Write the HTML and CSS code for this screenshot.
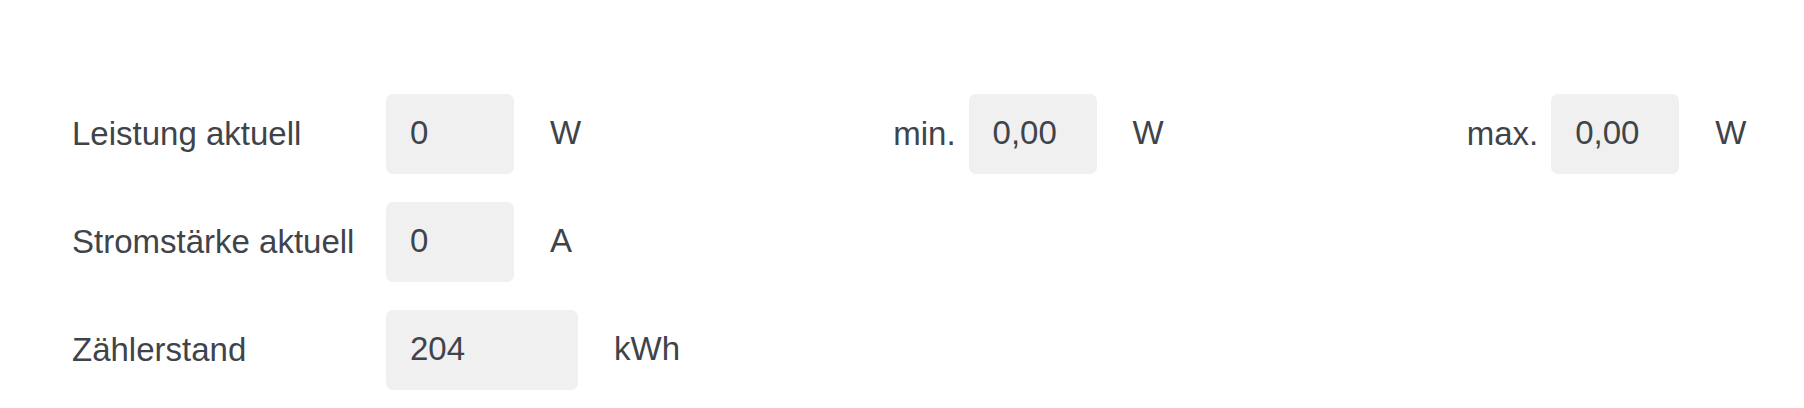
FILE: index.html
```html
<!DOCTYPE html>
<html lang="de">
<head>
<meta charset="utf-8">
<title>Zähler</title>
<link rel="stylesheet" href="styles.css">
</head>
<body>
<div class="panel">
  <div class="row">
    <div class="cell">
      <span class="label">Leistung aktuell</span>
      <span class="field">0</span>
      <span class="unit">W</span>
    </div>
    <div class="cell">
      <span class="label label-right">min.</span>
      <span class="field">0,00</span>
      <span class="unit">W</span>
    </div>
    <div class="cell">
      <span class="label label-right">max.</span>
      <span class="field">0,00</span>
      <span class="unit">W</span>
    </div>
  </div>
  <div class="row">
    <div class="cell">
      <span class="label">Stromstärke aktuell</span>
      <span class="field">0</span>
      <span class="unit">A</span>
    </div>
  </div>
  <div class="row">
    <div class="cell">
      <span class="label">Zählerstand</span>
      <span class="field field-wide">204</span>
      <span class="unit">kWh</span>
    </div>
  </div>
</div>
</body>
</html>
```

FILE: styles.css
```css
html, body {
  margin: 0;
  padding: 0;
  background: #ffffff;
}

body {
  font-family: "Liberation Sans", Arial, Helvetica, sans-serif;
  font-size: 33px;
  color: #3f444a;
  width: 1804px;
  height: 408px;
  overflow: hidden;
}

.panel {
  display: flex;
  flex-direction: column;
  gap: 28px;
  padding: 94px 0 0 72px;
}

.row {
  display: flex;
  height: 80px;
}

.cell {
  display: flex;
  align-items: center;
  width: 582.6px;
  flex: none;
}

.label {
  width: 314px;
  flex: none;
  padding-bottom: 1px;
  white-space: nowrap;
  box-sizing: border-box;
}

.label-right {
  text-align: right;
  padding-right: 13px;
}

.field {
  display: flex;
  align-items: center;
  box-sizing: border-box;
  width: 128px;
  height: 80px;
  padding-left: 24px;
  padding-bottom: 2px;
  background: #f0f0f0;
  border-radius: 7px;
  flex: none;
}

.field-wide {
  width: 192px;
}

.unit {
  margin-left: 36px;
  padding-bottom: 2px;
}
```
